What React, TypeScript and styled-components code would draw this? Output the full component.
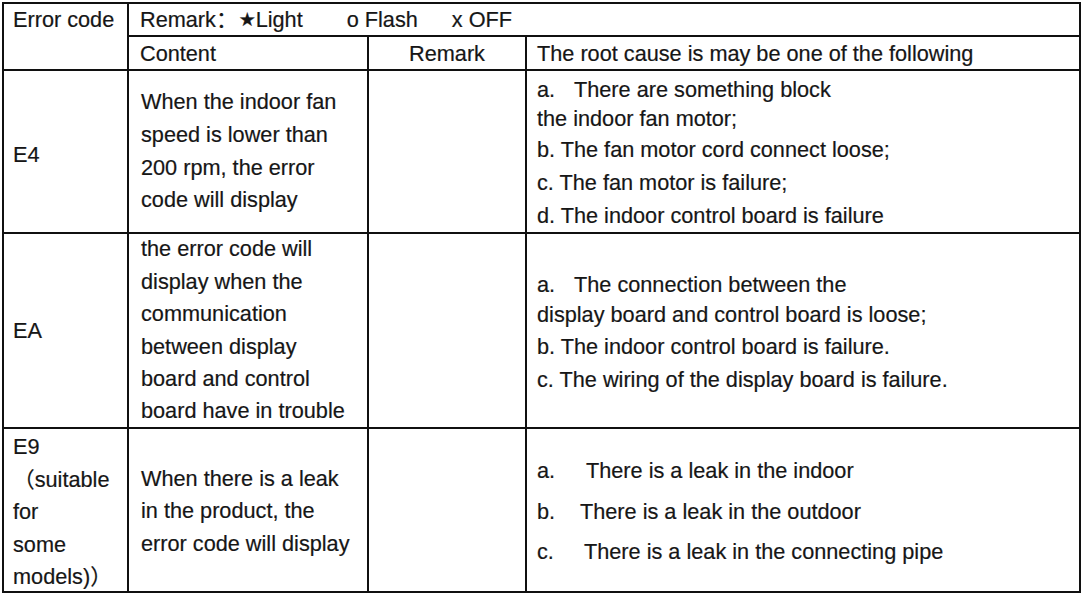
import React from "react";
import styled, { createGlobalStyle } from "styled-components";

const GlobalStyle = createGlobalStyle`
  html, body {
    margin: 0;
    padding: 0;
    background: #fff;
  }
  body {
    font-family: "Liberation Sans", Arial, "Noto Sans CJK SC", sans-serif;
    color: #161616;
  }
`;

// the table itself: black background shows through the 2px gaps as rules
const Sheet = styled.div`
  display: grid;
  grid-template-columns: 123px 238px 156px 552px;
  grid-template-rows: 31px 32px 161px 193px 162px;
  gap: 2px;
  padding: 2px;
  margin: 2px 0 0 2px;
  width: fit-content;
  background: #101010;
  font-size: 21.7px;
  -webkit-text-stroke: 0.2px #161616;
`;

interface CellProps {
  $col?: string;
  $row?: string;
  $top?: boolean;
  $middle?: boolean;
  $indent?: number;
  $lh?: number;
  $pt?: number;
}

const Cell = styled.div<CellProps>`
  background: #fff;
  display: flex;
  flex-direction: column;
  justify-content: ${(p) => (p.$top ? "flex-start" : "center")};
  align-items: ${(p) => (p.$middle ? "center" : "flex-start")};
  padding: ${(p) => p.$pt ?? 0}px 6px 0 ${(p) => p.$indent ?? 10}px;
  grid-column: ${(p) => p.$col ?? "auto"};
  grid-row: ${(p) => p.$row ?? "auto"};
  line-height: ${(p) => p.$lh ?? 31}px;
  white-space: nowrap;
  overflow: hidden;
`;

const Legend = styled.div`
  display: flex;
  align-items: center;
`;

const Key = styled.span<{ $gap?: number }>`
  margin-left: ${(p) => p.$gap ?? 0}px;
`;

const Star = styled.span`
  font-family: "DejaVu Sans", sans-serif;
  font-size: 19px;
  margin-left: 1px;
`;

// full-width punctuation falls back to the CJK face; keep it from growing the line
const Wide = styled.span`
  line-height: 0;
`;

const Line = styled.div<{ $h?: number }>`
  flex: none;
  ${(p) => (p.$h ? `height: ${p.$h}px;` : "")}
`;

const Cause = styled.div<{ $lh: number }>`
  line-height: ${(p) => p.$lh}px;
`;

const Marker = styled.span<{ $w: number }>`
  display: inline-block;
  width: ${(p) => p.$w}px;
`;

export default function App() {
  return (
    <>
      <GlobalStyle />
      <Sheet>
        <Cell $row="1 / 3" $top $indent={9}>
          Error code
        </Cell>
        <Cell $col="2 / 5" $indent={11}>
          <Legend>
            <Key>
              Remark<Wide>：</Wide>
            </Key>
            <Star>★</Star>
            <Key>Light</Key>
            <Key $gap={44}>o Flash</Key>
            <Key $gap={34}>x OFF</Key>
          </Legend>
        </Cell>

        <Cell $indent={11}>Content</Cell>
        <Cell $middle $indent={6}>Remark</Cell>
        <Cell $indent={10}>The root cause is may be one of the following</Cell>

        <Cell $indent={9} $pt={6}>E4</Cell>
        <Cell $indent={12} $lh={32.7}>
          <Line>When the indoor fan</Line>
          <Line>speed is lower than</Line>
          <Line>200 rpm, the error</Line>
          <Line>code will display</Line>
        </Cell>
        <Cell />
        <Cell $indent={10} $pt={4}>
          <Cause $lh={29}>
            <Marker $w={37}>a.</Marker>There are something block
            <br />
            the indoor fan motor;
          </Cause>
          <Cause $lh={33}>b. The fan motor cord connect loose;</Cause>
          <Cause $lh={33}>c. The fan motor is failure;</Cause>
          <Cause $lh={33}>d. The indoor control board is failure</Cause>
        </Cell>

        <Cell $indent={9}>EA</Cell>
        <Cell $indent={12} $lh={32.4}>
          <Line>the error code will</Line>
          <Line>display when the</Line>
          <Line>communication</Line>
          <Line>between display</Line>
          <Line>board and control</Line>
          <Line>board have in trouble</Line>
        </Cell>
        <Cell />
        <Cell $indent={10} $pt={5}>
          <Cause $lh={30}>
            <Marker $w={37}>a.</Marker>The connection between the
            <br />
            display board and control board is loose;
          </Cause>
          <Cause $lh={33}>b. The indoor control board is failure.</Cause>
          <Cause $lh={33}>c. The wiring of the display board is failure.</Cause>
        </Cell>

        <Cell $indent={9} $lh={32.5} $top $pt={2}>
          <Line $h={32.5}>E9</Line>
          <Line $h={32.5}>
            <Wide>（</Wide>suitable
          </Line>
          <Line $h={32.5}>for</Line>
          <Line $h={32.5}>some</Line>
          <Line $h={32.5}>
            models)<Wide>）</Wide>
          </Line>
        </Cell>
        <Cell $indent={12} $lh={32.5} $pt={3}>
          <Line>When there is a leak</Line>
          <Line>in the product, the</Line>
          <Line>error code will display</Line>
        </Cell>
        <Cell />
        <Cell $indent={10} $pt={4}>
          <Cause $lh={40.5}>
            <Marker $w={49}>a.</Marker>There is a leak in the indoor
          </Cause>
          <Cause $lh={40.5}>
            <Marker $w={43}>b.</Marker>There is a leak in the outdoor
          </Cause>
          <Cause $lh={40.5}>
            <Marker $w={47}>c.</Marker>There is a leak in the connecting pipe
          </Cause>
        </Cell>
      </Sheet>
    </>
  );
}
